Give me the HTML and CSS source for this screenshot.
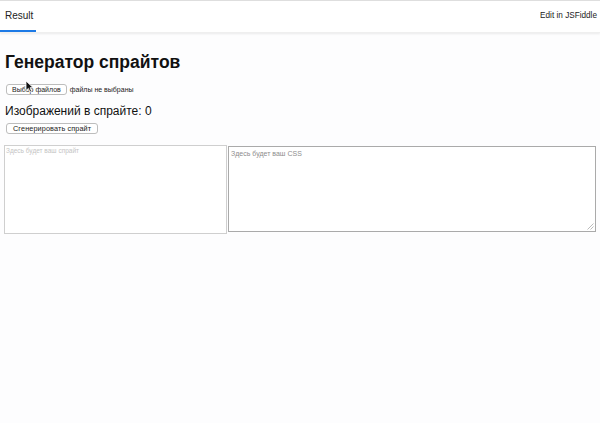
FILE: index.html
```html
<!DOCTYPE html>
<html lang="ru">
<head>
<meta charset="utf-8">
<title>Генератор спрайтов</title>
<link rel="stylesheet" href="styles.css">
</head>
<body>
<header class="bar">
  <div class="tab">Result</div>
  <div class="edit">Edit in JSFiddle</div>
</header>
<main class="page">
  <h1 class="title">Генератор спрайтов</h1>
  <div class="file-row">
    <button class="btn">Выбор файлов</button>
    <span class="file-note">файлы не выбраны</span>
  </div>
  <p class="count">Изображений в спрайте: 0</p>
  <button class="btn btn-wide">Сгенерировать спрайт</button>
  <div class="boxes">
    <div class="sprite"><span class="ph">Здесь будет ваш спрайт</span></div>
    <div class="css-area"><span class="ph ph-css">Здесь будет ваш CSS</span>
      <svg class="grip" width="7" height="7" viewBox="0 0 7 7"><path d="M0.5 6.5 L6.5 0.5 M3.5 6.5 L6.5 3.5" stroke="#aaa" stroke-width="0.8" fill="none"/></svg>
    </div>
  </div>
</main>
<svg class="cursor" width="9" height="13" viewBox="0 0 9 13"><path d="M1 1 L1 10.5 L3.4 8.4 L5 12 L6.5 11.3 L5 7.8 L8 7.6 Z" fill="#111" stroke="#fff" stroke-width="0.8"/></svg>
</body>
</html>
```
FILE: styles.css
```css
html, body {
  margin: 0;
  background: #fdfdfe;
  font-family: "Liberation Sans", Arial, sans-serif;
  color: #111;
}
.bar {
  height: 31px;
  border-top: 1px solid #dedede;
  background: #fff;
  display: flex;
  justify-content: space-between;
  align-items: stretch;
  box-shadow: 0 1px 2px rgba(0, 0, 0, 0.08);
  border-bottom: 1px solid #efefef;
}
.tab {
  width: 36px;
  box-sizing: border-box;
  padding-left: 5px;
  font-size: 10px;
  display: flex;
  align-items: center;
  border-bottom: 2px solid #1d7ae6;
  color: #222;
}
.edit {
  font-size: 8.2px;
  display: flex;
  align-items: center;
  padding-right: 3px;
  padding-bottom: 2px;
  color: #222;
}
.page {
  padding: 0 4px;
}
.title {
  font-size: 17.5px;
  margin: 18px 0 11px 1px;
  line-height: 22px;
}
.file-row {
  display: flex;
  align-items: center;
  gap: 3px;
}
.btn {
  display: block;
  height: 11px;
  padding: 0 5px;
  margin-left: 2px;
  font-family: "Liberation Sans", Arial, sans-serif;
  font-size: 7px;
  line-height: 9px;
  color: #222;
  background: #fff;
  border: 1px solid #bdbdbd;
  border-radius: 3px;
}
.btn-wide {
  padding: 0 6px;
  font-size: 7.3px;
  letter-spacing: 0.1px;
}
.file-note {
  font-size: 7px;
  color: #222;
}
.count {
  font-size: 12px;
  margin: 9px 0 5px 1px;
  line-height: 14px;
}
.boxes {
  display: flex;
  align-items: flex-start;
  gap: 1px;
  margin-top: 11px;
}
.sprite {
  width: 223px;
  height: 89px;
  box-sizing: border-box;
  border: 1px solid #cfcfcf;
  background: #fff;
  padding: 1px 0 0 1px;
}
.css-area {
  position: relative;
  margin-top: 1px;
  width: 368px;
  height: 86px;
  box-sizing: border-box;
  border: 1px solid #aaa;
  background: #fff;
  padding: 3px 0 0 2px;
}
.ph {
  display: block;
  font-size: 6.5px;
  color: #c4c4c4;
}
.ph-css {
  color: #8d8d8d;
  font-size: 7px;
}
.grip {
  position: absolute;
  right: 1px;
  bottom: 1px;
}
.cursor {
  position: absolute;
  left: 25px;
  top: 80px;
}
```
